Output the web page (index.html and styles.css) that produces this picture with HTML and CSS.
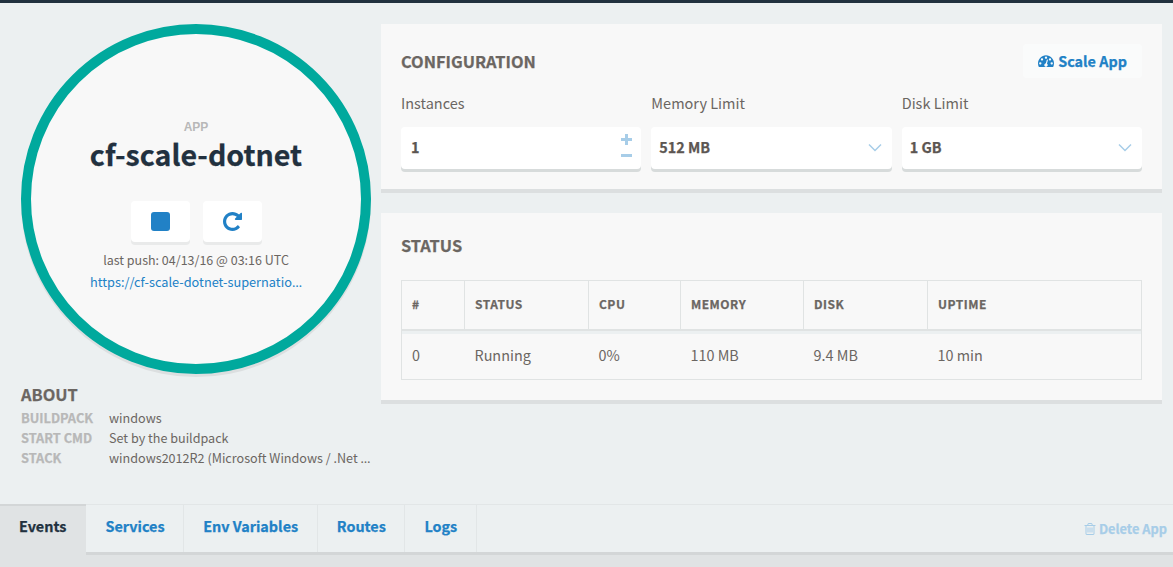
FILE: index.html
```html
<!DOCTYPE html>
<html lang="en">
<head>
  <meta charset="UTF-8" />
  <title>cf-scale-dotnet</title>
  <link rel="stylesheet" href="styles.css">
</head>
<body>

  <div class="topbar"></div>

  <div class="main">
    <div class="side">
      <div class="circle">
        <div class="app-label">APP</div>
        <h1 class="app-name">cf-scale-dotnet</h1>
        <div class="app-actions">
          <button class="round-btn" type="button"><span class="stop-icon"></span></button>
          <button class="round-btn" type="button">
            <svg class="repeat-icon" viewBox="128 128 1536 1536"><path d="M1664 256v448q0 26-19 45t-45 19h-448q-42 0-59-40-17-39 14-69l138-138q-148-137-349-137-104 0-198.5 40.5t-163.5 109.5-109.5 163.5-40.5 198.5 40.5 198.5 109.5 163.5 163.5 109.5 198.5 40.5q119 0 225-52t179-147q7-10 23-12 15 0 25 9l137 138q9 8 9.5 20.5t-7.5 22.5q-109 132-264 204.5t-327 72.5q-156 0-298-61t-245-164-164-245-61-298 61-298 164-245 245-164 298-61q147 0 284.5 55.5t244.5 156.5l130-129q29-31 70-14 39 17 39 59z"/></svg>
          </button>
        </div>
        <div class="last-push">last push: 04/13/16 @ 03:16 UTC</div>
        <a class="app-url" href="#">https://cf-scale-dotnet-supernatio<span class="dots">…</span></a>
      </div>

      <div class="about">
        <h3>ABOUT</h3>
        <div class="about-row"><span class="about-key">BUILDPACK</span><span class="about-val">windows</span></div>
        <div class="about-row"><span class="about-key">START CMD</span><span class="about-val">Set by the buildpack</span></div>
        <div class="about-row"><span class="about-key">STACK</span><span class="about-val">windows2012R2 (Microsoft Windows / .Net <span class="dots">…</span></span></div>
      </div>
    </div>

    <div class="panels">
      <section class="panel config">
        <div class="panel-head">
          <h2>CONFIGURATION</h2>
          <button class="scale-btn" type="button">
            <svg class="scale-icon" viewBox="0 128 1792 1408"><path d="M384 1152q0-53-37.5-90.5t-90.5-37.5-90.5 37.5-37.5 90.5 37.5 90.5 90.5 37.5 90.5-37.5 37.5-90.5zm192-448q0-53-37.5-90.5t-90.5-37.5-90.5 37.5-37.5 90.5 37.5 90.5 90.5 37.5 90.5-37.5 37.5-90.5zm428 481l101-382q6-26-7.5-48.5t-38.5-29.5-48 6.5-30 39.5l-101 382q-60 5-107 43.5t-63 98.5q-20 77 20 146t117 89 146-20 89-117q16-60-6-117t-72-91zm660-33q0-53-37.5-90.5t-90.5-37.5-90.5 37.5-37.5 90.5 37.5 90.5 90.5 37.5 90.5-37.5 37.5-90.5zm-640-640q0-53-37.5-90.5t-90.5-37.5-90.5 37.5-37.5 90.5 37.5 90.5 90.5 37.5 90.5-37.5 37.5-90.5zm448 192q0-53-37.5-90.5t-90.5-37.5-90.5 37.5-37.5 90.5 37.5 90.5 90.5 37.5 90.5-37.5 37.5-90.5zm320 448q0 261-141 483-19 29-54 29h-1402q-35 0-54-29-141-221-141-483 0-182 71-348t191-286 286-191 348-71 348 71 286 191 191 286 71 348z"/></svg>
            Scale App
          </button>
        </div>
        <div class="fields">
          <div class="field">
            <label>Instances</label>
            <div class="input-box">
              <span>1</span>
              <span class="stepper"><i class="plus"></i><i class="minus"></i></span>
            </div>
          </div>
          <div class="field">
            <label>Memory Limit</label>
            <div class="input-box select">
              <span>512 MB</span>
              <svg class="chevron" viewBox="0 0 14 9"><path d="M1 1.5l6 6 6-6"/></svg>
            </div>
          </div>
          <div class="field">
            <label>Disk Limit</label>
            <div class="input-box select">
              <span>1 GB</span>
              <svg class="chevron" viewBox="0 0 14 9"><path d="M1 1.5l6 6 6-6"/></svg>
            </div>
          </div>
        </div>
      </section>

      <section class="panel status">
        <h2>STATUS</h2>
        <table>
          <thead>
            <tr>
              <th class="col-id">#</th>
              <th class="col-status">STATUS</th>
              <th class="col-cpu">CPU</th>
              <th class="col-mem">MEMORY</th>
              <th class="col-disk">DISK</th>
              <th>UPTIME</th>
            </tr>
          </thead>
          <tbody>
            <tr>
              <td>0</td>
              <td>Running</td>
              <td>0%</td>
              <td>110 MB</td>
              <td>9.4 MB</td>
              <td>10 min</td>
            </tr>
          </tbody>
        </table>
      </section>
    </div>
  </div>

  <div class="tabs">
    <a class="tab active" href="#">Events</a>
    <a class="tab" href="#">Services</a>
    <a class="tab" href="#">Env Variables</a>
    <a class="tab" href="#">Routes</a>
    <a class="tab" href="#">Logs</a>
    <a class="delete-app" href="#">
      <svg class="trash-icon" viewBox="128 128 1536 1536"><path d="M704 736v576q0 14-9 23t-23 9h-64q-14 0-23-9t-9-23v-576q0-14 9-23t23-9h64q14 0 23 9t9 23zm256 0v576q0 14-9 23t-23 9h-64q-14 0-23-9t-9-23v-576q0-14 9-23t23-9h64q14 0 23 9t9 23zm256 0v576q0 14-9 23t-23 9h-64q-14 0-23-9t-9-23v-576q0-14 9-23t23-9h64q14 0 23 9t9 23zm128 724v-948h-896v948q0 22 7 40.5t14.5 27 10.5 8.5h832q3 0 10.5-8.5t14.5-27 7-40.5zm-672-1076h448l-48-117q-7-9-17-11h-317q-10 2-17 11zm928 32v64q0 14-9 23t-23 9h-96v948q0 83-47 143.5t-113 60.5h-832q-66 0-113-58.5t-47-141.5v-952h-96q-14 0-23-9t-9-23v-64q0-14 9-23t23-9h309l70-167q15-37 54-63t79-26h320q40 0 79 26t54 63l70 167h309q14 0 23 9t9 23z"/></svg>
      Delete App
    </a>
  </div>
  <div class="tabs-foot"></div>

</body>
</html>
```

FILE: styles.css
```css
html, body {
  margin: 0;
  height: 567px;
  overflow: hidden;
}
body {
  font-family: "Noto Sans CJK SC", "Noto Sans", sans-serif;
  font-size: 14px;
  line-height: 20px;
  color: #6b6662;
  background: #ecf0f1;
}
h1, h2, h3 {
  margin: 0;
}
a {
  text-decoration: none;
}
button {
  font-family: inherit;
  border: none;
  padding: 0;
}
.dots {
  font-family: "Noto Sans", sans-serif;
}
/* bold text in the reference sits a little heavier than the 700 face here */
.app-name, .panel h2, .about h3, .about-key, th, .tab, .scale-btn, .input-box, .delete-app {
  -webkit-text-stroke: 0.25px;
}
.topbar {
  height: 3px;
  background: #22313f;
}
.main {
  display: flex;
  height: 501px;
}
.side {
  width: 381px;
  flex: none;
  padding: 21px 0 0 21px;
  box-sizing: border-box;
}
.circle {
  width: 350px;
  height: 350px;
  box-sizing: border-box;
  border: 10px solid #00a99d;
  border-radius: 50%;
  background: #f8f8f8;
  box-shadow: 0 3px 0 #dcdfe0;
  display: flex;
  flex-direction: column;
  align-items: center;
  padding-top: 86px;
}
.app-label {
  font-family: "Liberation Sans", Arial, sans-serif;
  font-size: 12px;
  font-weight: bold;
  line-height: 14px;
  color: #b8b8b8;
}
.app-name {
  font-size: 28.6px;
  line-height: 36px;
  font-weight: 700;
  color: #22313f;
  margin-top: 2px;
}
.app-actions {
  display: flex;
  gap: 13px;
  margin-top: 29px;
}
.round-btn {
  width: 59px;
  height: 41px;
  background: #fff;
  border-radius: 4px;
  box-shadow: 0 3px 0 #e9eaea;
  display: flex;
  align-items: center;
  justify-content: center;
}
.stop-icon {
  width: 19px;
  height: 19px;
  border-radius: 3px;
  background: #2181c6;
}
.repeat-icon {
  width: 19px;
  height: 19px;
  fill: #2181c6;
}
.last-push {
  font-size: 12.5px;
  line-height: 20px;
  margin-top: 8px;
}
.app-url {
  font-size: 12.75px;
  line-height: 20px;
  color: #2181c6;
  margin-top: 2px;
  white-space: nowrap;
}
.about {
  margin-top: 9px;
}
.about h3 {
  font-size: 16.4px;
  line-height: 22px;
  font-weight: 700;
}
.about-row {
  display: flex;
  font-size: 12.6px;
  line-height: 20px;
  position: relative;
  top: 3px;
}
.about-key {
  width: 88px;
  flex: none;
  font-size: 12.8px;
  font-weight: 700;
  color: #b8b8b8;
}
.about-val {
  white-space: nowrap;
}
.panels {
  width: 781px;
  padding-top: 21px;
}
.panel {
  background: #f8f8f8;
  box-shadow: 0 4px 0 #dcdfe0;
  box-sizing: border-box;
  padding: 0 20px;
}
.panel h2 {
  font-size: 16.4px;
  line-height: 22px;
  font-weight: 700;
}
.config {
  height: 165px;
  padding-top: 20px;
}
.panel-head {
  display: flex;
  justify-content: space-between;
  align-items: center;
}
.scale-btn {
  display: flex;
  align-items: center;
  gap: 4px;
  height: 34px;
  padding: 0 15px 2px;
  border-radius: 4px;
  background: #fafbfb;
  color: #2181c6;
  font-size: 14.4px;
  font-weight: 700;
}
.scale-icon {
  width: 16px;
  height: 13px;
  fill: #2181c6;
}
.fields {
  display: flex;
  gap: 10px;
  margin-top: 15px;
}
.field {
  flex: 1;
}
.field label {
  display: block;
  font-size: 14.5px;
  line-height: 20px;
  margin-bottom: 14px;
}
.input-box {
  height: 42px;
  box-sizing: border-box;
  background: #fff;
  border-radius: 4px;
  box-shadow: 0 3px 0 #d7dbdb;
  display: flex;
  align-items: center;
  justify-content: space-between;
  padding: 0 10px 2px;
  font-size: 14.4px;
  font-weight: 700;
  color: #5c5652;
}
.input-box.select {
  padding: 0 10px 2px 8px;
}
.stepper {
  display: flex;
  flex-direction: column;
  gap: 5px;
  margin-right: -1px;
}
.stepper i {
  display: block;
  width: 11px;
  height: 11px;
  position: relative;
}
.stepper i::before,
.plus::after {
  content: "";
  position: absolute;
  background: #a7cde8;
}
.stepper i::before {
  left: 0;
  top: 4px;
  width: 11px;
  height: 3px;
}
.plus::after {
  left: 4px;
  top: 0;
  width: 3px;
  height: 11px;
}
.chevron {
  width: 14px;
  height: 9px;
  fill: none;
  stroke: #a7cde8;
  stroke-width: 1.5;
}
.status {
  margin-top: 24px;
  height: 187px;
  padding-top: 21px;
}
table {
  width: 100%;
  margin-top: 24px;
  border-collapse: collapse;
  table-layout: fixed;
  border: 1px solid #e0e3e3;
}
th {
  height: 45px;
  padding: 0 10px 3px;
  text-align: left;
  font-size: 12px;
  font-weight: 700;
  letter-spacing: 0.5px;
  border-right: 1px solid #e0e3e3;
  border-bottom: 2px solid #e0e3e3;
}
th:last-child {
  border-right: none;
}
td {
  height: 48px;
  padding: 0 10px;
  font-size: 14.4px;
  box-shadow: inset 0 3px 0 #ecf0f1;
}
.col-id { width: 42px; }
.col-status { width: 103px; }
.col-cpu { width: 71px; }
.col-mem { width: 102px; }
.col-disk { width: 103px; }
.tabs {
  display: flex;
  height: 47px;
  border-top: 1px solid #e2e6e7;
  border-bottom: 3px solid #d3d6d7;
  position: relative;
}
.tab {
  display: flex;
  align-items: center;
  padding: 0 18.6px 6px 19px;
  font-size: 14.4px;
  font-weight: 700;
  color: #2181c6;
  border-right: 1px solid #e2e6e7;
}
.tab.active {
  color: #22313f;
  background: #e0e3e4;
  border-right: none;
  border-top: 2px solid #d3d6d7;
  margin-top: -1px;
  margin-bottom: -3px;
  padding: 0 20px 10px 19px;
}
.delete-app {
  margin-left: auto;
  margin-right: 6px;
  align-self: center;
  display: flex;
  align-items: center;
  gap: 3px;
  font-size: 12.8px;
  font-weight: 700;
  color: #a7cde8;
}
.trash-icon {
  width: 12px;
  height: 12px;
  fill: #a7cde8;
}
.tabs-foot {
  height: 13px;
  background: #e0e3e4;
}
```
